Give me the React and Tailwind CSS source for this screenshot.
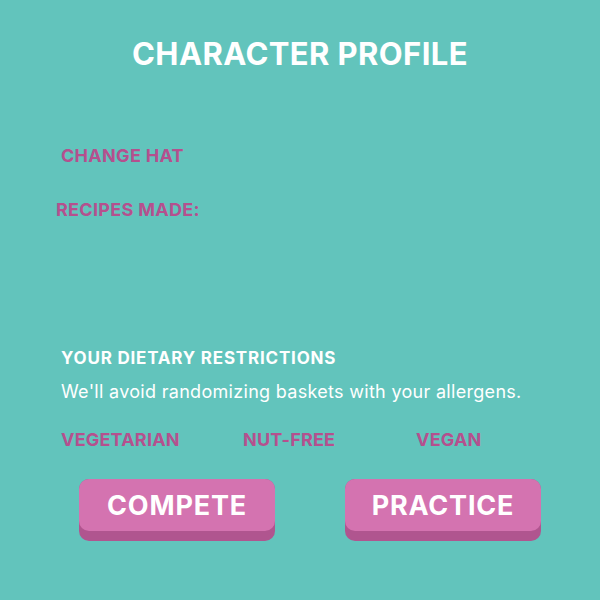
import React from 'react';

const pink = 'text-[#b5508e]';

const GameButton = ({ label }) => (
  <button className="w-[196px] h-[62px] rounded-[10px] bg-[#b0558f] pb-[10px]">
    <div className="h-[52px] pt-[3px] rounded-[10px] bg-[#d473b0] flex items-center justify-center text-white font-bold text-[27px] tracking-[0.8px]">
      {label}
    </div>
  </button>
);

const App = () => {
  return (
    <div className="w-[600px] h-[600px] bg-[#62c4bc] font-['Inter',sans-serif] flex flex-col">
      {/* Header */}
      <h1 className="mt-[36px] text-center text-white font-bold text-[31px] leading-[36px] tracking-[0.4px]">
        CHARACTER PROFILE
      </h1>

      <div className={`mt-[74px] ml-[61px] ${pink} font-bold text-[18px] leading-[20px] tracking-[0.3px]`}>
        CHANGE HAT
      </div>
      <div className={`mt-[34px] ml-[56px] ${pink} font-bold text-[18px] leading-[20px] tracking-[0.3px]`}>
        RECIPES MADE:
      </div>

      {/* Dietary restrictions */}
      <div className="mt-[128px] ml-[61px] text-white">
        <div className="font-bold text-[17px] leading-[20px] tracking-[0.8px]">YOUR DIETARY RESTRICTIONS</div>
        <p className="mt-[13px] text-[18px] leading-[22px] tracking-[0.3px]">
          We'll avoid randomizing baskets with your allergens.
        </p>
      </div>

      <div className={`mt-[27px] ml-[61px] flex ${pink} font-bold text-[18px] leading-[20px] tracking-[0.2px]`}>
        <span className="w-[182px]">VEGETARIAN</span>
        <span className="w-[173px]">NUT-FREE</span>
        <span>VEGAN</span>
      </div>

      <div className="mt-[29px] ml-[79px] flex gap-[70px]">
        <GameButton label="COMPETE" />
        <GameButton label="PRACTICE" />
      </div>
    </div>
  );
};

export default App;
